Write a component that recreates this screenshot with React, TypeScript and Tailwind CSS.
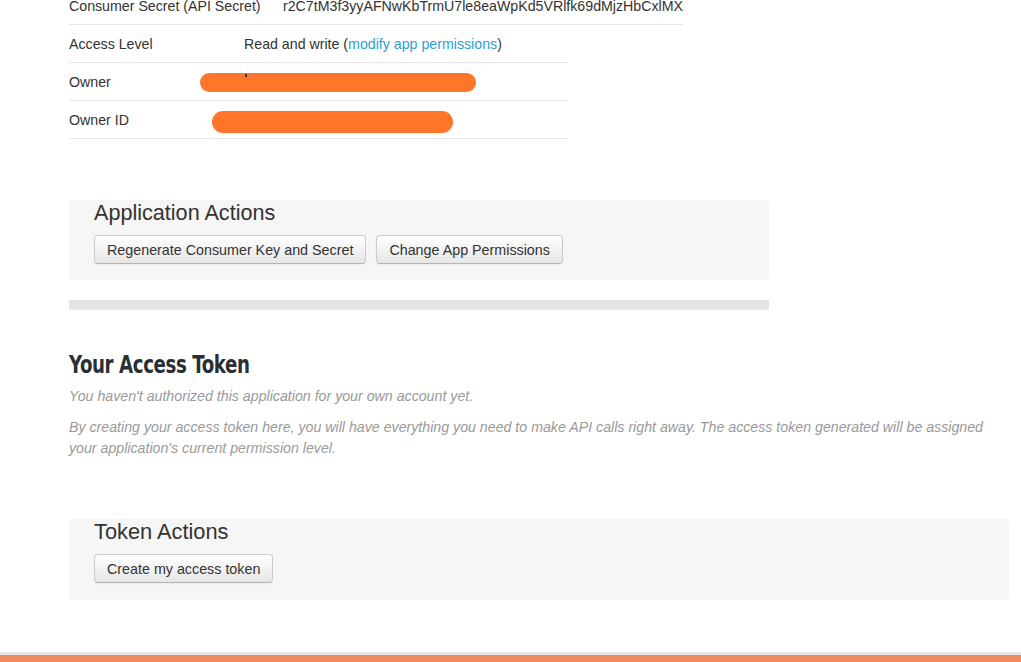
import React from "react";

const Btn = ({ children }: { children: React.ReactNode }) => (
  <button className="h-[29px] px-[12px] rounded-[4px] border border-[#cccccc] border-b-[#b3b3b3] bg-gradient-to-b from-white to-[#e6e6e6] text-[14.3px] leading-[20px] text-[#333] shadow-[inset_0_1px_0_rgba(255,255,255,0.2),0_1px_2px_rgba(0,0,0,0.05)]">
    {children}
  </button>
);

const Redact = ({ w, h }: { w: number; h: number }) => (
  <svg width={w} height={h} viewBox={`0 0 ${w} ${h}`}>
    <rect x="0" y="0" width={w} height={h} rx={h / 2} fill="#ff7628" />
  </svg>
);

export default function App() {
  return (
    <div
      className="w-[1021px] h-[662px] overflow-hidden bg-white flex flex-col text-[#333]"
      style={{ fontFamily: '"Liberation Sans", Arial, sans-serif' }}
    >
      <div className="flex-1 pl-[69px]">
        {/* Table 1 */}
        <div className="w-[614px] -mt-[13px] flex border-b border-[#e6e6e6] h-[38px] items-center pt-[3px] text-[14.2px]">
          <div className="w-[214px]">Consumer Secret (API Secret)</div>
          <div>r2C7tM3f3yyAFNwKbTrmU7le8eaWpKd5VRlfk69dMjzHbCxlMX</div>
        </div>
        {/* Table 2 */}
        <div className="w-[499px] text-[14.2px]">
          <div className="flex h-[38px] items-center pt-[3px] border-b border-[#e6e6e6]">
            <div className="w-[175px]">Access Level</div>
            <div>
              Read and write (<span className="text-[#2a9fd6]">modify app permissions</span>)
            </div>
          </div>
          <div className="flex h-[38px] items-center pt-[2px] border-b border-[#e6e6e6]">
            <div className="w-[131px]">Owner</div>
            <div className="relative">
              <Redact w={276} h={19} />
              <span className="absolute left-[45px] top-[1px] w-[2px] h-[3px] bg-[#333]" />
            </div>
          </div>
          <div className="flex h-[38px] items-center pt-[3px] border-b border-[#e6e6e6]">
            <div className="w-[143px]">Owner ID</div>
            <div className="pt-[2px]">
              <Redact w={241} h={22} />
            </div>
          </div>
        </div>

        {/* Application Actions well */}
        <div className="mt-[61px] w-[700px] h-[80px] bg-[#f6f6f6] rounded-[4px] pl-[25px]">
          <div className="text-[21.6px] leading-[24px] pt-[1px]">Application Actions</div>
          <div className="mt-[10px] flex gap-[10px]">
            <Btn>Regenerate Consumer Key and Secret</Btn>
            <Btn>Change App Permissions</Btn>
          </div>
        </div>

        <div className="mt-[20px] w-[700px] h-[10px] bg-[#e5e5e5]" />

        <h2
          className="mt-[40px] text-[25px] leading-[30px] font-bold text-[#292f33] tracking-[-0.5px] origin-left scale-x-[0.81] w-max"
          style={{ fontFamily: '"Liberation Sans Narrow", "DejaVu Sans Condensed", "Roboto Condensed", Roboto, sans-serif' }}
        >
          Your Access Token
        </h2>
        <p className="mt-[6px] text-[14.2px] leading-[21px] italic text-[#999]">
          You haven't authorized this application for your own account yet.
        </p>
        <p className="mt-[10px] w-[940px] text-[14.2px] leading-[21px] italic text-[#999]">
          By creating your access token here, you will have everything you need to make API calls right away. The access token generated will be assigned your application's current permission level.
        </p>

        {/* Token Actions well */}
        <div className="mt-[60px] w-[940px] h-[81px] bg-[#f6f6f6] rounded-[4px] pl-[25px]">
          <div className="text-[21.8px] leading-[24px] pt-[1px]">Token Actions</div>
          <div className="mt-[10px] flex">
            <Btn>Create my access token</Btn>
          </div>
        </div>
      </div>
      <div className="h-[3px] bg-[#e6e6e6]" />
      <div className="h-[7px] bg-[#ef8a60]" />
    </div>
  );
}
